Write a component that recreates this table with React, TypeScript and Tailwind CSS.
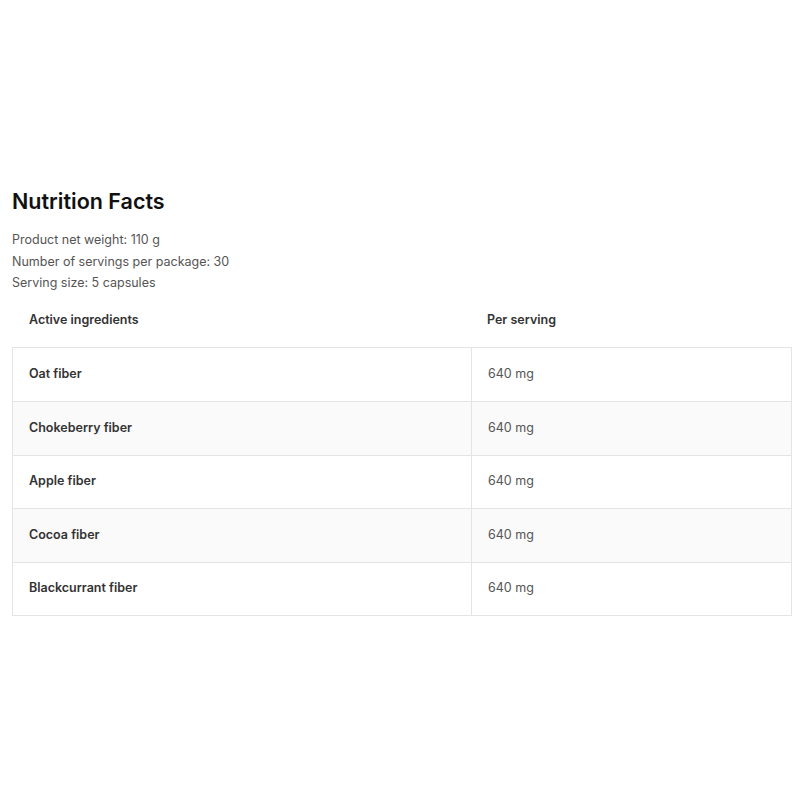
import React from "react";

const rows = [
  "Oat fiber",
  "Chokeberry fiber",
  "Apple fiber",
  "Cocoa fiber",
  "Blackcurrant fiber",
];

export default function App() {
  return (
    <div className="w-[800px] h-[800px] bg-white px-3 pt-[186px]" style={{ fontFamily: "Inter, 'Noto Sans', sans-serif" }}>
      <h2 className="text-[21.5px] leading-[30px] font-semibold text-[#111]">Nutrition Facts</h2>
      <div className="mt-[13px] text-[12.5px] leading-[21.5px] text-[#555]">
        <div>Product net weight: 110 g</div>
        <div>Number of servings per package: 30</div>
        <div>Serving size: 5 capsules</div>
      </div>
      <div className="grid grid-cols-[459px_321px] h-[53px] items-center text-[12.5px] font-semibold text-[#333]">
        <div className="pl-[17px]">Active ingredients</div>
        <div className="pl-[16px]">Per serving</div>
      </div>
      <div className="w-[780px] border border-[#e4e4e4]">
        {rows.map((r, i) => (
          <div
            key={r}
            className={`grid grid-cols-[459px_319px] h-[53.5px] text-[12.5px] ${i > 0 ? "border-t border-[#e4e4e4]" : ""} ${i % 2 === 1 ? "bg-[#fafafa]" : "bg-white"}`}
          >
            <div className="flex items-center pl-[16px] font-semibold text-[#333] border-r border-[#e4e4e4]">{r}</div>
            <div className="flex items-center pl-[16px] text-[#555]">640 mg</div>
          </div>
        ))}
      </div>
    </div>
  );
}
